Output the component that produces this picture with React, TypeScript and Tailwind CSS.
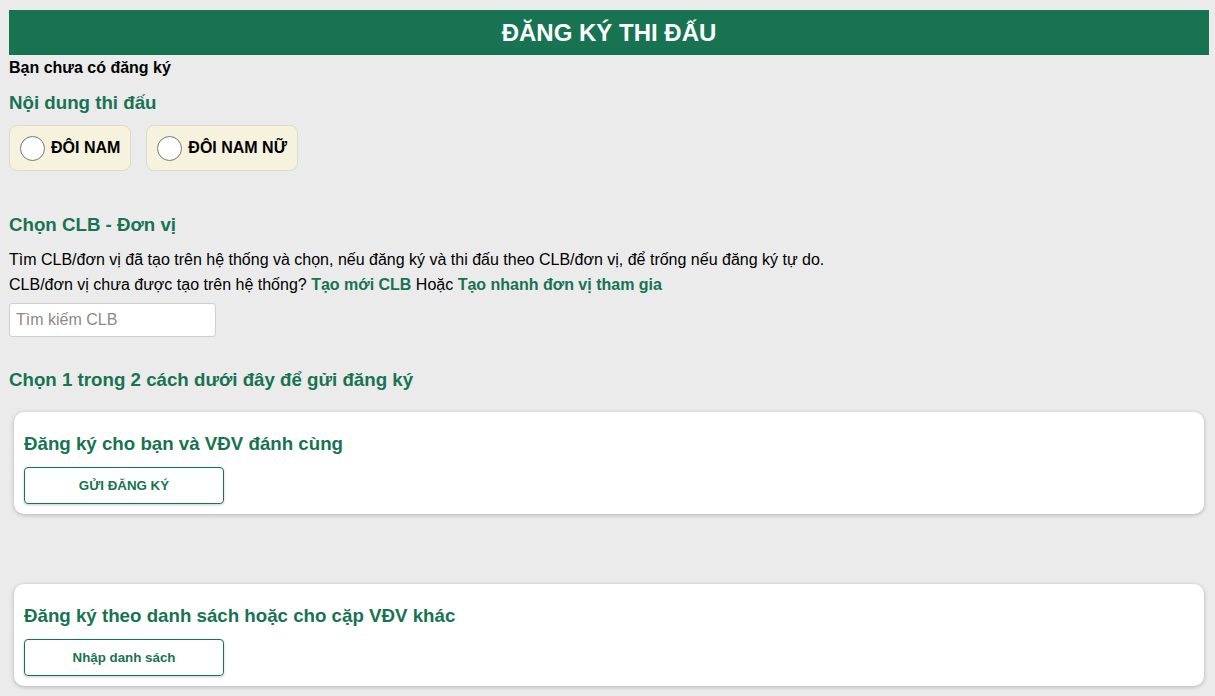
const green = 'text-[#177352]';

function Radio({ label }: { label: string }) {
  return (
    <label className="flex h-[46px] items-center gap-[6px] rounded-[8px] border border-[#dedcc8] bg-[#f5f3dd] pl-[10px] pr-[10px]">
      <span className="block h-[25px] w-[25px] rounded-full border border-[#767676] bg-white" />
      <span className="text-[16px] font-bold text-black">{label}</span>
    </label>
  );
}

function OptionCard({ title, button }: { title: string; button: string }) {
  return (
    <div className="ml-[5px] mr-[5px] h-[102px] rounded-[10px] bg-white px-[10px] pt-[20px] shadow-[0_1px_4px_rgba(0,0,0,0.25)]">
      <h3 className={`text-[18.72px] font-bold leading-[24px] ${green}`}>{title}</h3>
      <button
        className={`mt-[11px] h-[37px] w-[200px] rounded-[4px] border border-[#177352] bg-white text-[13.33px] font-bold ${green} shadow-[0_1px_3px_rgba(0,0,0,0.2)]`}
      >
        {button}
      </button>
    </div>
  );
}

export default function App() {
  return (
    <div
      className="min-h-screen bg-[#ebebeb] pl-[9px] pr-[6px] pt-[10px] text-black"
      style={{ fontFamily: '"Liberation Sans", Arial, sans-serif' }}
    >
      <div className="flex h-[45px] items-center justify-center bg-[#177352]">
        <h2 className="text-[24px] font-bold text-white">ĐĂNG KÝ THI ĐẤU</h2>
      </div>

      <p className="mt-[4px] text-[16px] font-bold leading-[18px]">Bạn chưa có đăng ký</p>

      <h3 className={`mt-[15px] text-[18.72px] font-bold leading-[22px] ${green}`}>Nội dung thi đấu</h3>
      <div className="mt-[11px] flex gap-[15px]">
        <Radio label="ĐÔI NAM" />
        <Radio label="ĐÔI NAM NỮ" />
      </div>

      <h3 className={`mt-[43px] text-[18.72px] font-bold leading-[22px] ${green}`}>Chọn CLB - Đơn vị</h3>
      <div className="mt-[11px] text-[16px] leading-[25px]">
        <p>Tìm CLB/đơn vị đã tạo trên hệ thống và chọn, nếu đăng ký và thi đấu theo CLB/đơn vị, để trống nếu đăng ký tự do.</p>
        <p>
          CLB/đơn vị chưa được tạo trên hệ thống? <a className={`font-bold ${green}`}>Tạo mới CLB</a> Hoặc{' '}
          <a className={`font-bold ${green}`}>Tạo nhanh đơn vị tham gia</a>
        </p>
      </div>
      <input
        placeholder="Tìm kiếm CLB"
        className="mt-[6px] h-[34px] w-[207px] rounded-[3px] border border-[#cfcfcf] bg-white px-[6px] text-[16px] outline-none placeholder:text-[#8a8a8a]"
      />

      <h3 className={`mt-[32px] text-[18.72px] font-bold leading-[22px] ${green}`}>Chọn 1 trong 2 cách dưới đây để gửi đăng ký</h3>

      <div className="mt-[21px]">
        <OptionCard title="Đăng ký cho bạn và VĐV đánh cùng" button="GỬI ĐĂNG KÝ" />
      </div>
      <div className="mt-[70px]">
        <OptionCard title="Đăng ký theo danh sách hoặc cho cặp VĐV khác" button="Nhập danh sách" />
      </div>
    </div>
  );
}
